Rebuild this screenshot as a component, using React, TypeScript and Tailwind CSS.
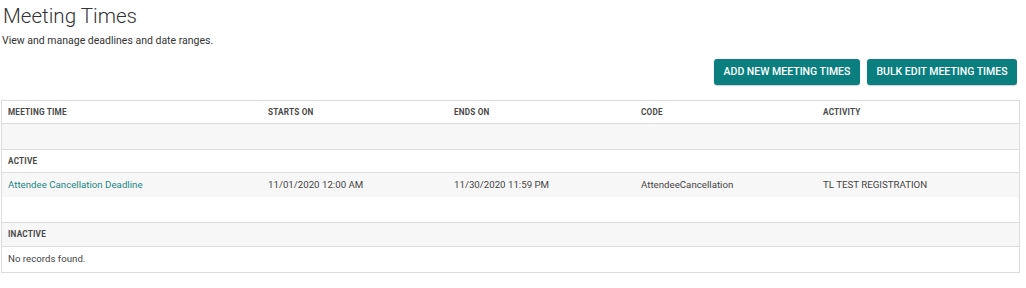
const COLS = ["w-[260px]", "w-[186px]", "w-[187px]", "w-[182px]", "flex-1"];

function Row({ cells, gray, h, teal }: { cells: string[]; gray?: boolean; h: string; teal?: boolean }) {
  return (
    <div className={`flex items-center border-t border-[#dcdcdc] ${h} ${gray ? "bg-[#f7f7f7]" : "bg-white"}`}>
      {cells.map((c, i) => (
        <div key={i} className={`${COLS[i]} pl-[6px] text-[9.7px] ${i === 0 && teal ? "text-[#1a8585]" : "text-[#444]"}`}>
          {c}
        </div>
      ))}
    </div>
  );
}

function Label({ text, gray, h }: { text: string; gray?: boolean; h: string }) {
  return (
    <div className={`flex items-center border-t border-[#dcdcdc] pl-[6px] ${h} ${gray ? "bg-[#f7f7f7]" : "bg-white"}`}>
      <span className="text-[8.2px] font-bold tracking-[0.2px] text-[#4a4a4a]">{text}</span>
    </div>
  );
}

export default function App() {
  const headers = ["MEETING TIME", "STARTS ON", "ENDS ON", "CODE", "ACTIVITY"];
  return (
    <div className="w-[1026px] h-[288px] bg-white pl-px pr-[6px] font-['Roboto',sans-serif]">
      <h1 className="pt-[3px] pl-[2px] text-[20.6px] font-light leading-[26px] text-[#333]">Meeting Times</h1>
      <p className="mt-[5px] pl-[1px] text-[10.5px] leading-[14px] text-[#333]">View and manage deadlines and date ranges.</p>

      <div className="mt-[11px] flex justify-end gap-[7px] pr-[3px]">
        <button className="h-[26px] w-[146px] rounded-[3px] bg-[#0b7f80] text-[10.5px] font-medium text-white shadow-[0_1px_1px_rgba(0,0,0,0.2)]">
          ADD NEW MEETING TIMES
        </button>
        <button className="h-[26px] w-[150px] rounded-[3px] bg-[#0b7f80] text-[10.5px] font-medium text-white shadow-[0_1px_1px_rgba(0,0,0,0.2)]">
          BULK EDIT MEETING TIMES
        </button>
      </div>

      <div className="mt-[15px] border border-[#dcdcdc]">
        <div className="flex h-[22px] items-center bg-white">
          {headers.map((h, i) => (
            <div key={h} className={`${COLS[i]} pl-[6px] text-[8.2px] font-bold tracking-[0.2px] text-[#4a4a4a]`}>
              {h}
            </div>
          ))}
        </div>
        <div className="h-[26px] border-t border-[#dcdcdc] bg-[#f7f7f7]" />
        <Label text="ACTIVE" h="h-[23px]" />
        <Row
          cells={["Attendee Cancellation Deadline", "11/01/2020 12:00 AM", "11/30/2020 11:59 PM", "AttendeeCancellation", "TL TEST REGISTRATION"]}
          gray
          teal
          h="h-[25px]"
        />
        <div className="h-[25px] bg-white" />
        <Label text="INACTIVE" gray h="h-[24px]" />
        <div className="flex h-[26px] items-center border-t border-[#dcdcdc] pl-[6px] text-[9.7px] text-[#444]">No records found.</div>
      </div>
    </div>
  );
}
